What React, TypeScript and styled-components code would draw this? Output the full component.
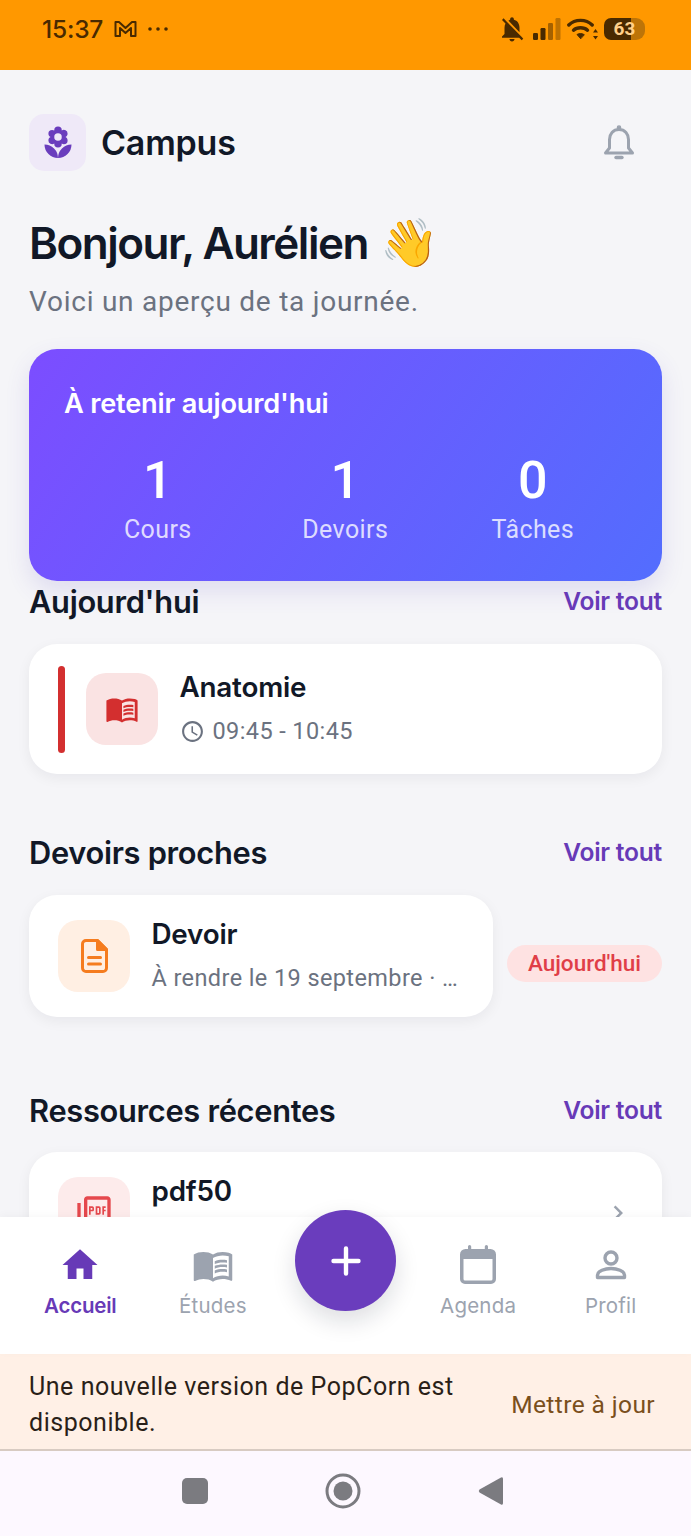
import React from "react";
import styled, { createGlobalStyle } from "styled-components";
import {
  MdLocalFlorist,
  MdMenuBook,
  MdHome,
  MdNotificationsOff,
  MdAccessTime,
  MdOutlinePictureAsPdf,
  MdChevronRight,
} from "react-icons/md";

const Global = createGlobalStyle`
  html, body { margin: 0; padding: 0; background: #f5f5f8; }
  * { box-sizing: border-box; }
`;

const Screen = styled.div`
  width: 691px;
  height: 1536px;
  display: flex;
  flex-direction: column;
  overflow: hidden;
  background: #f5f5f8;
  font-family: Roboto, sans-serif;
  position: relative;
`;

const StatusBar = styled.div`
  height: 70px;
  flex: none;
  background: #ff9800;
  color: #492a00;
  display: flex;
  align-items: flex-start;
  justify-content: space-between;
  padding: 17px 46px 0 42px;
`;

const StatusGroup = styled.div<{ $gap: number }>`
  display: flex;
  align-items: center;
  height: 24px;
  gap: ${(p) => p.$gap}px;
`;

const Clock = styled.span`
  font: 500 24.5px/24px Inter, sans-serif;
  letter-spacing: -0.2px;
`;

const Battery = styled.div`
  width: 41px;
  height: 22px;
  display: flex;
  align-items: center;
  justify-content: center;
  font: 700 19px/22px Roboto, sans-serif;
  color: #ffd08a;
  border-radius: 7px 9px 9px 7px;
  background: linear-gradient(90deg, #492a00 0 66%, #bd7408 66% 100%);
`;

const Main = styled.main`
  flex: 1;
  min-height: 0;
  overflow: hidden;
  padding: 44px 29px 0;
`;

const Header = styled.header`
  height: 57px;
  display: flex;
  align-items: center;
  gap: 15px;
`;

const LogoTile = styled.div`
  width: 57px;
  height: 57px;
  border-radius: 15px;
  background: #efe9f8;
  color: #6a3dbd;
  display: flex;
  align-items: center;
  justify-content: center;
`;

const AppName = styled.h1`
  margin: 0;
  flex: 1;
  font: 600 34px/57px Inter, sans-serif;
  letter-spacing: -0.2px;
  color: #111827;
`;

const BellSlot = styled.div`
  width: 38px;
  display: flex;
  justify-content: center;
  color: #9ca3af;
  margin-right: 24px;
`;

const Greeting = styled.h2`
  margin: 47px 0 0;
  height: 50px;
  font: 600 44px/50px Inter, sans-serif;
  letter-spacing: -1.5px;
  color: #111827;
`;

const Wave = styled.span`
  font-size: 47px;
  line-height: 0;
  letter-spacing: 0;
  margin-left: 3px;
`;

const Subline = styled.p`
  margin: 18px 0 0;
  font: 400 28px/32px Roboto, sans-serif;
  letter-spacing: 0.75px;
  color: #6b7280;
`;

const SummaryCard = styled.section`
  margin-top: 31px;
  height: 232px;
  border-radius: 28px;
  padding: 36px 36px 0 35px;
  color: #fff;
  background: linear-gradient(125deg, #7c4dff 0%, #536dfe 100%);
  box-shadow: 0 10px 24px rgba(83, 70, 190, 0.14);
`;

const SummaryTitle = styled.h3`
  margin: 0;
  font: 600 27.2px/38px Inter, sans-serif;
  letter-spacing: -0.2px;
`;

const StatGrid = styled.div`
  display: grid;
  grid-template-columns: repeat(3, 187.5px);
  margin-top: 28px;
`;

const Stat = styled.div`
  display: flex;
  flex-direction: column;
  align-items: center;
`;

const StatValue = styled.span`
  font: 500 52px/60px Roboto, sans-serif;
`;

const StatLabel = styled.span`
  margin-top: 4px;
  font: 400 25px/30px Roboto, sans-serif;
  letter-spacing: 0.4px;
  color: rgba(255, 255, 255, 0.8);
`;

const SectionHead = styled.div<{ $top: number }>`
  margin-top: ${(p) => p.$top}px;
  height: 42px;
  display: flex;
  align-items: center;
  justify-content: space-between;
`;

const SectionTitle = styled.h3`
  margin: 0;
  font: 600 30.8px/42px Inter, sans-serif;
  letter-spacing: -0.3px;
  color: #111827;
`;

const SeeAll = styled.a`
  font: 600 24.6px/40px Inter, sans-serif;
  letter-spacing: -0.25px;
  color: #673ab7;
  margin-top: -2px;
`;

const Card = styled.div<{ $height: number; $pad: string; $top: number }>`
  margin-top: ${(p) => p.$top}px;
  min-height: ${(p) => p.$height}px;
  padding: ${(p) => p.$pad};
  background: #fff;
  border-radius: 28px;
  display: flex;
  align-items: center;
  flex: 1;
  box-shadow: 0 4px 14px rgba(17, 24, 39, 0.06);
`;

const AccentBar = styled.div`
  width: 7px;
  height: 87px;
  border-radius: 4px;
  background: #d32f2f;
  margin-right: 21px;
`;

const IconTile = styled.div<{ $bg: string; $fg: string }>`
  width: 72px;
  height: 72px;
  flex: none;
  border-radius: 20px;
  background: ${(p) => p.$bg};
  color: ${(p) => p.$fg};
  display: flex;
  align-items: center;
  justify-content: center;
  margin-right: 21.5px;
`;

const CardBody = styled.div`
  flex: 1;
  min-width: 0;
  display: flex;
  flex-direction: column;
`;

const CardTitle = styled.div`
  font: 600 27.8px/36px Inter, sans-serif;
  letter-spacing: -0.2px;
  color: #111827;
`;

const CardMeta = styled.div`
  margin-top: 8px;
  display: flex;
  align-items: center;
  gap: 8px;
  font: 400 23.5px/36px Roboto, sans-serif;
  letter-spacing: 0.4px;
  color: #6b7280;
  white-space: nowrap;
`;

const DueRow = styled.div`
  display: flex;
  align-items: center;
  gap: 14px;
`;

const DuePill = styled.span`
  flex: none;
  width: 155px;
  height: 37px;
  border-radius: 19px;
  background: #fee2e2;
  color: #e03e47;
  font: 500 22.5px/37px Roboto, sans-serif;
  text-align: center;
  margin-top: 35px;
`;

const BottomNav = styled.nav`
  position: relative;
  flex: none;
  height: 137px;
  background: #fff;
  display: grid;
  grid-template-columns: repeat(5, 1fr);
  padding: 0 14px;
  box-shadow: 0 -2px 8px rgba(17, 24, 39, 0.03);
`;

const NavItem = styled.div<{ $active?: boolean }>`
  display: flex;
  flex-direction: column;
  align-items: center;
  padding-top: 27px;
  color: ${(p) => (p.$active ? "#673ab7" : "#9ca3af")};
`;

const NavLabel = styled.span<{ $active?: boolean }>`
  margin-top: 5px;
  font: ${(p) => (p.$active ? 600 : 400)} 20.5px/30px Inter, sans-serif;
  letter-spacing: ${(p) => (p.$active ? "-0.2px" : "0.2px")};
`;

const Fab = styled.button`
  position: absolute;
  left: 295px;
  top: -7px;
  width: 101px;
  height: 101px;
  border: 0;
  border-radius: 50%;
  padding: 0;
  background: #6a3dbd;
  color: #fff;
  display: flex;
  align-items: center;
  justify-content: center;
  box-shadow: 0 10px 24px rgba(17, 24, 39, 0.14);
`;

const UpdateBanner = styled.div`
  flex: none;
  height: 97px;
  background: #fff0e6;
  border-bottom: 2px solid #d8cbc2;
  display: flex;
  align-items: center;
  justify-content: space-between;
  padding: 6px 36px 0 29px;
`;

const UpdateText = styled.p`
  margin: 0;
  width: 450px;
  font: 400 25px/36px Roboto, sans-serif;
  letter-spacing: 0.54px;
  color: #2a1f18;
`;

const UpdateAction = styled.span`
  font: 400 24.5px/36px Roboto, sans-serif;
  letter-spacing: 0.4px;
  color: #7a4f1c;
`;

const SystemNav = styled.div`
  flex: none;
  height: 85px;
  background: #fdf8ff;
  color: #7b7b80;
  display: flex;
  align-items: flex-start;
  justify-content: center;
  padding: 22px 6px 0 0;
`;

const SystemKey = styled.div`
  width: 148px;
  height: 36px;
  display: flex;
  align-items: center;
  justify-content: center;
`;

const Mail = () => (
  <svg width="23" height="18" viewBox="0 0 23 18" fill="none" stroke="currentColor" strokeWidth="2" strokeLinejoin="round">
    <path d="M1.5 2 H5 L11.5 8 L18 2 H21.5 V16 H17 V8 L11.5 13 L6 8 V16 H1.5 Z" />
  </svg>
);

const Dots = () => (
  <svg width="20" height="4" viewBox="0 0 20 4" fill="currentColor">
    <circle cx="2" cy="2" r="1.8" />
    <circle cx="10" cy="2" r="1.8" />
    <circle cx="18" cy="2" r="1.8" />
  </svg>
);

const Signal = () => (
  <svg width="28" height="22" viewBox="0 0 28 22" fill="currentColor">
    <rect x="0" y="15" width="5" height="7" rx="1.2" />
    <rect x="7.5" y="10" width="5" height="12" rx="1.2" />
    <rect x="15" y="5" width="5" height="17" rx="1.2" opacity="0.5" />
    <rect x="22.5" y="0" width="5" height="22" rx="1.2" opacity="0.35" />
  </svg>
);

const Wifi = () => (
  <svg width="31" height="22" viewBox="0 0 31 22" fill="none" stroke="currentColor" strokeWidth="3.4" strokeLinecap="round">
    <path d="M1.8 7 C8 0.8 19 0.8 25.2 7" />
    <path d="M6.5 12.2 C10 9 17 9 20.5 12.2" />
    <path d="M13.5 20.5 L10 16.5 C12 15.2 15 15.2 17 16.5 Z" fill="currentColor" strokeWidth="1" strokeLinejoin="round" />
    <path d="M28.5 11 L26 14.5 H31 Z M28.5 21.5 L26 18 H31 Z" fill="currentColor" stroke="none" />
  </svg>
);

const BellOutline = () => (
  <svg width="38" height="38" viewBox="0 0 38 38" fill="none" stroke="currentColor" strokeWidth="3" strokeLinejoin="round" strokeLinecap="round">
    <path d="M19 5.5 C13 5.5 9.5 10 9.5 15.5 V24 L5.5 29 H32.5 L28.5 24 V15.5 C28.5 10 25 5.5 19 5.5 Z" />
    <circle cx="19" cy="3.5" r="1.6" fill="currentColor" strokeWidth="1.4" />
    <path d="M16 33.5 H22" strokeWidth="3.4" />
  </svg>
);

const DocumentGlyph = () => (
  <svg width="27" height="34" viewBox="0 0 27 34" fill="none" stroke="currentColor" strokeWidth="3" strokeLinejoin="round" strokeLinecap="round">
    <path d="M5 1.5 H16.5 L25.5 10.5 V29 A3.5 3.5 0 0 1 22 32.5 H5 A3.5 3.5 0 0 1 1.5 29 V5 A3.5 3.5 0 0 1 5 1.5 Z" />
    <path d="M16.5 1.5 V10.5 H25.5 Z" fill="currentColor" />
    <path d="M7.5 18.5 H19.5 M7.5 25 H19.5" />
  </svg>
);

const PersonGlyph = () => (
  <svg width="42" height="42" viewBox="0 0 42 42" fill="none" stroke="currentColor" strokeWidth="3.4" strokeLinejoin="round">
    <circle cx="21" cy="14" r="6" />
    <path d="M7.5 33.5 V31 C7.5 27 15 24.5 21 24.5 C27 24.5 34.5 27 34.5 31 V33.5 Z" />
  </svg>
);

const CalendarGlyph = () => (
  <svg width="42" height="42" viewBox="0 0 42 42" fill="currentColor">
    <path d="M11 2.5 a1.6 1.6 0 0 1 3.2 0 V5 h13.6 V2.5 a1.6 1.6 0 0 1 3.2 0 V5 h2.5 A5.5 5.5 0 0 1 39 10.5 V35 a5 5 0 0 1 -5 5 H8 a5 5 0 0 1 -5 -5 V10.5 A5.5 5.5 0 0 1 8.5 5 H11 Z M6.5 15 V35 a1.5 1.5 0 0 0 1.5 1.5 H34 a1.5 1.5 0 0 0 1.5 -1.5 V15 Z" fillRule="evenodd" />
  </svg>
);

const PlusGlyph = () => (
  <svg width="30" height="30" viewBox="0 0 30 30" fill="none" stroke="currentColor" strokeWidth="4.4" strokeLinecap="round">
    <path d="M15 2.5 V27.5 M2.5 15 H27.5" />
  </svg>
);

const BackTriangle = () => (
  <svg width="26" height="30" viewBox="0 0 26 30" fill="currentColor">
    <path d="M23 1.5 Q25 0.5 25 3 V27 Q25 29.5 23 28.5 L1.5 16.5 Q0 15 1.5 13.5 Z" />
  </svg>
);

const HomeRing = () => (
  <svg width="36" height="36" viewBox="0 0 36 36" fill="currentColor">
    <circle cx="18" cy="18" r="16" fill="none" stroke="currentColor" strokeWidth="3" />
    <circle cx="18" cy="18" r="9.5" />
  </svg>
);

const StopSquare = () => (
  <svg width="26" height="26" viewBox="0 0 26 26" fill="currentColor">
    <rect width="26" height="26" rx="5" />
  </svg>
);

const stats = [
  { value: "1", label: "Cours" },
  { value: "1", label: "Devoirs" },
  { value: "0", label: "Tâches" },
];

export default function App() {
  return (
    <Screen>
      <Global />
      <StatusBar>
        <StatusGroup $gap={11}>
          <Clock>15:37</Clock>
          <Mail />
          <Dots />
        </StatusGroup>
        <StatusGroup $gap={6}>
          <MdNotificationsOff size={30} />
          <Signal />
          <Wifi />
          <Battery>63</Battery>
        </StatusGroup>
      </StatusBar>

      <Main>
        <Header>
          <LogoTile>
            <MdLocalFlorist size={36} />
          </LogoTile>
          <AppName>Campus</AppName>
          <BellSlot>
            <BellOutline />
          </BellSlot>
        </Header>

        <Greeting>
          Bonjour, Aurélien <Wave>👋</Wave>
        </Greeting>
        <Subline>Voici un aperçu de ta journée.</Subline>

        <SummaryCard>
          <SummaryTitle>À retenir aujourd'hui</SummaryTitle>
          <StatGrid>
            {stats.map((s) => (
              <Stat key={s.label}>
                <StatValue>{s.value}</StatValue>
                <StatLabel>{s.label}</StatLabel>
              </Stat>
            ))}
          </StatGrid>
        </SummaryCard>

        <SectionHead $top={0}>
          <SectionTitle>Aujourd'hui</SectionTitle>
          <SeeAll>Voir tout</SeeAll>
        </SectionHead>
        <Card $top={21} $height={130} $pad="0 29px">
          <AccentBar />
          <IconTile $bg="#fae3e3" $fg="#d32f2f">
            <MdMenuBook size={34} />
          </IconTile>
          <CardBody>
            <CardTitle>Anatomie</CardTitle>
            <CardMeta>
              <MdAccessTime size={25} />
              09:45 - 10:45
            </CardMeta>
          </CardBody>
        </Card>

        <SectionHead $top={58}>
          <SectionTitle>Devoirs proches</SectionTitle>
          <SeeAll>Voir tout</SeeAll>
        </SectionHead>
        <DueRow>
          <Card $top={21} $height={122} $pad="0 29px">
            <IconTile $bg="#ffefe3" $fg="#f57c1f">
              <DocumentGlyph />
            </IconTile>
            <CardBody>
              <CardTitle>Devoir</CardTitle>
              <CardMeta>À rendre le 19 septembre · …</CardMeta>
            </CardBody>
          </Card>
          <DuePill>Aujourd'hui</DuePill>
        </DueRow>

        <SectionHead $top={73}>
          <SectionTitle>Ressources récentes</SectionTitle>
          <SeeAll>Voir tout</SeeAll>
        </SectionHead>
        <Card $top={20} $height={122} $pad="0 29px">
          <IconTile $bg="#fdebeb" $fg="#e5484d">
            <MdOutlinePictureAsPdf size={40} />
          </IconTile>
          <CardBody>
            <CardTitle>pdf50</CardTitle>
            <CardMeta>&nbsp;</CardMeta>
          </CardBody>
          <MdChevronRight size={30} color="#9ca3af" />
        </Card>
      </Main>

      <BottomNav>
        <NavItem $active>
          <MdHome size={42} />
          <NavLabel $active>Accueil</NavLabel>
        </NavItem>
        <NavItem>
          <MdMenuBook size={42} />
          <NavLabel>Études</NavLabel>
        </NavItem>
        <NavItem />
        <NavItem>
          <CalendarGlyph />
          <NavLabel>Agenda</NavLabel>
        </NavItem>
        <NavItem>
          <PersonGlyph />
          <NavLabel>Profil</NavLabel>
        </NavItem>
        <Fab aria-label="Ajouter">
          <PlusGlyph />
        </Fab>
      </BottomNav>

      <UpdateBanner>
        <UpdateText>Une nouvelle version de PopCorn est disponible.</UpdateText>
        <UpdateAction>Mettre à jour</UpdateAction>
      </UpdateBanner>

      <SystemNav>
        <SystemKey>
          <StopSquare />
        </SystemKey>
        <SystemKey>
          <HomeRing />
        </SystemKey>
        <SystemKey>
          <BackTriangle />
        </SystemKey>
      </SystemNav>
    </Screen>
  );
}
